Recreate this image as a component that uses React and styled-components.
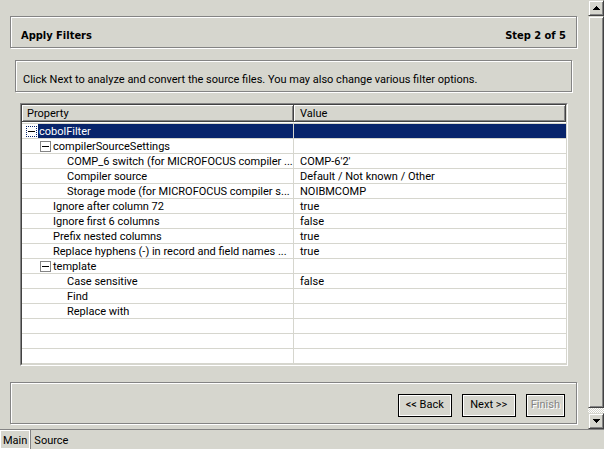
import React, { useState } from "react";
import styled, { createGlobalStyle, css } from "styled-components";

const rows = [
  { name: "cobolFilter", level: 0, open: true, selected: true },
  { name: "compilerSourceSettings", level: 1, open: true },
  { name: "COMP_6 switch (for MICROFOCUS compiler ...", level: 2, value: "COMP-6'2'" },
  { name: "Compiler source", level: 2, value: "Default / Not known / Other" },
  { name: "Storage mode (for MICROFOCUS compiler s...", level: 2, value: "NOIBMCOMP" },
  { name: "Ignore after column 72", level: 1, value: "true" },
  { name: "Ignore first 6 columns", level: 1, value: "false" },
  { name: "Prefix nested columns", level: 1, value: "true" },
  { name: "Replace hyphens (-) in record and field names ...", level: 1, value: "true" },
  { name: "template", level: 1, open: true },
  { name: "Case sensitive", level: 2, value: "false" },
  { name: "Find", level: 2 },
  { name: "Replace with", level: 2 },
  {},
  {},
  {},
];

const App = () => {
  const [tab, setTab] = useState("Main");

  return (
    <>
      <GlobalStyle />
      <Window>
        <Body>
          <Page>
            <TitleBar>
              <Title>Apply Filters</Title>
              <Title as="span">Step 2 of 5</Title>
            </TitleBar>
            <Content>
              <Info>
                Click Next to analyze and convert the source files. You may also
                change various filter options.
              </Info>
              <TableFrame>
                <Table>
                  <thead>
                    <tr>
                      <HeadCell $width="50%">Property</HeadCell>
                      <HeadCell>Value</HeadCell>
                    </tr>
                  </thead>
                  <tbody>
                    {rows.map((row, i) => (
                      <PropertyRow key={i} {...row} />
                    ))}
                  </tbody>
                </Table>
              </TableFrame>
            </Content>
            <Footer>
              <Button type="button">&lt;&lt; Back</Button>
              <Button type="button">Next &gt;&gt;</Button>
              <Button type="button" disabled>
                Finish
              </Button>
            </Footer>
          </Page>
          <ScrollBar>
            <ScrollButton type="button" aria-label="Scroll up">
              <Arrow d="M3 0h1v1h1v1h1v1h1v1H0V3h1V2h1V1h1z" />
            </ScrollButton>
            <Thumb />
            <Track />
            <ScrollButton type="button" aria-label="Scroll down">
              <Arrow d="M0 0h7v1H6v1H5v1H4v1H3V3H2V2H1V1H0z" />
            </ScrollButton>
          </ScrollBar>
        </Body>
        <Tabs role="tablist">
          {["Main", "Source"].map((name) => (
            <Tab
              key={name}
              type="button"
              role="tab"
              aria-selected={tab === name}
              $active={tab === name}
              onClick={() => setTab(name)}
            >
              {name}
            </Tab>
          ))}
        </Tabs>
      </Window>
    </>
  );
};

const PropertyRow = ({ name, level = 0, open, value, selected }) => (
  <Row $selected={selected}>
    <NameCell>
      <Name $level={level} $leaf={!open}>
        {open && (
          <Toggle type="button" aria-label={`Collapse ${name}`} $selected={selected} />
        )}
        <Label $selected={selected}>{name}</Label>
      </Name>
    </NameCell>
    <Cell>
      <Value>{value}</Value>
    </Cell>
  </Row>
);

const Arrow = ({ d }) => (
  <svg width="7" height="4" viewBox="0 0 7 4" shapeRendering="crispEdges">
    <path d={d} />
  </svg>
);

const GlobalStyle = createGlobalStyle`
  * {
    box-sizing: border-box;
  }

  body {
    margin: 0;
    background: #d6d6ce;
    color: #000;
  }

  body,
  button {
    font-family: Tahoma, Roboto, "DejaVu Sans", sans-serif;
    font-size: 11px;
    line-height: 14px;
  }
`;

const etched = css`
  border: 1px solid #848484;
  box-shadow: 1px 1px 0 #fff, inset 1px 1px 0 #fff;
`;

const raised = css`
  background: #d6d6ce;
  border: 1px solid;
  border-color: #d6d6ce #424242 #424242 #d6d6ce;
  box-shadow: inset 1px 1px 0 #fff, inset -1px -1px 0 #848484;
`;

const Window = styled.div`
  display: flex;
  flex-direction: column;
  min-height: 100vh;
`;

const Body = styled.div`
  display: flex;
  flex: 1;
  border-bottom: 1px solid #848484;
`;

const Page = styled.main`
  display: flex;
  flex-direction: column;
  flex: 1;
  min-width: 0;
  padding: 16px 11px 5px 10px;
`;

const TitleBar = styled.header`
  ${etched}
  display: flex;
  align-items: center;
  justify-content: space-between;
  height: 32px;
  padding: 7px 10px 0;
`;

const Title = styled.h1`
  margin: 0;
  font-family: Tahoma, "DejaVu Sans Condensed", "DejaVu Sans", sans-serif;
  font-size: 11px;
  font-weight: bold;
`;

const Content = styled.div`
  flex: 1;
  padding: 12px 5px 16px;
`;

const Info = styled.p`
  ${etched}
  margin: 0;
  padding: 12px 7px 4px;
`;

const TableFrame = styled.div`
  margin: 11px 4px 0 5px;
  border: 1px solid;
  border-color: #848484 #fff #fff #848484;
  background: #fff;
`;

const Table = styled.table`
  width: 100%;
  table-layout: fixed;
  border-collapse: separate;
  border-spacing: 0;
  border: 1px solid;
  border-color: #424242 #d6d6ce #d6d6ce #424242;
`;

const HeadCell = styled.th`
  ${raised}
  width: ${(p) => p.$width || "auto"};
  height: 17px;
  padding: 2px 5px 0;
  border-width: 0 1px 1px 0;
  font-weight: normal;
  line-height: 14px;
  text-align: left;

  &:last-child {
    padding-left: 6px;
  }
`;

const Cell = styled.td`
  height: 15px;
  padding: 0 6px;
  border-bottom: 1px solid #d6d6ce;
  white-space: nowrap;
`;

const NameCell = styled(Cell)`
  padding: 0 0 0 4px;
  border-right: 1px solid #d6d6ce;
`;

const Row = styled.tr`
  color: ${(p) => (p.$selected ? "#fff" : "#000")};

  ${Cell}:last-child {
    background: ${(p) => (p.$selected ? "#08246b" : "#fff")};
    background-clip: padding-box;
  }

  &:first-child ${Cell} {
    height: 17px;
    padding-top: 1px;
    border-top: 1px solid #fff;
    box-shadow: inset 0 1px 0 #d6d6ce;
  }
`;

const Name = styled.div`
  display: flex;
  align-items: center;
  gap: 1px;
  height: 14px;
  padding-left: ${(p) => p.$level * 14 + (p.$leaf ? 12 : 0)}px;
`;

const Value = styled.div`
  height: 14px;
  line-height: 16px;
`;

const Label = styled(Value)`
  flex: 1;
  padding-left: 1px;
  background: ${(p) => (p.$selected ? "#08246b" : "transparent")};
`;

const Toggle = styled.button`
  display: flex;
  align-items: center;
  justify-content: center;
  flex: none;
  width: 11px;
  height: 11px;
  padding: 0;
  border: 1px ${(p) => (p.$selected ? "dotted #08246b" : "solid #848484")};
  background: #fff;

  &::before {
    content: "";
    width: 7px;
    height: 1px;
    background: #000;
  }
`;

const Footer = styled.footer`
  ${etched}
  display: flex;
  align-items: center;
  justify-content: flex-end;
  gap: 10px;
  height: 42px;
  padding: 4px 11px 0;
`;

const Button = styled.button`
  min-width: 54px;
  height: 23px;
  padding: 0 4px;
  border: 1px solid #000;
  background: #d6d6ce;
  color: #000;
  box-shadow: inset 0 0 0 1px #fff;

  &:disabled {
    min-width: 0;
    color: #848484;
    text-shadow: 1px 1px 0 #fff;
  }
`;

const ScrollBar = styled.div`
  display: flex;
  flex-direction: column;
  flex: none;
  width: 16px;
`;

const ScrollButton = styled.button`
  ${raised}
  display: flex;
  align-items: center;
  justify-content: center;
  height: 16px;
  padding: 0;
`;

const Thumb = styled.div`
  ${raised}
  flex: 1;
`;

const Track = styled.div`
  height: 5px;
  background: repeating-conic-gradient(#fff 0 25%, #d6d6ce 0 50%) 0 0 / 2px 2px;
`;

const Tabs = styled.div`
  display: flex;
  height: 19px;
`;

const Tab = styled.button`
  padding: 2px 3px 0;
  border: 0;
  border-right: 1px solid ${(p) => (p.$active ? "#848484" : "transparent")};
  background: #d6d6ce;
  color: #000;
  box-shadow: ${(p) => (p.$active ? "inset 1px 1px 0 #fff, inset -1px -1px 0 #fff" : "none")};
`;

export default App;
